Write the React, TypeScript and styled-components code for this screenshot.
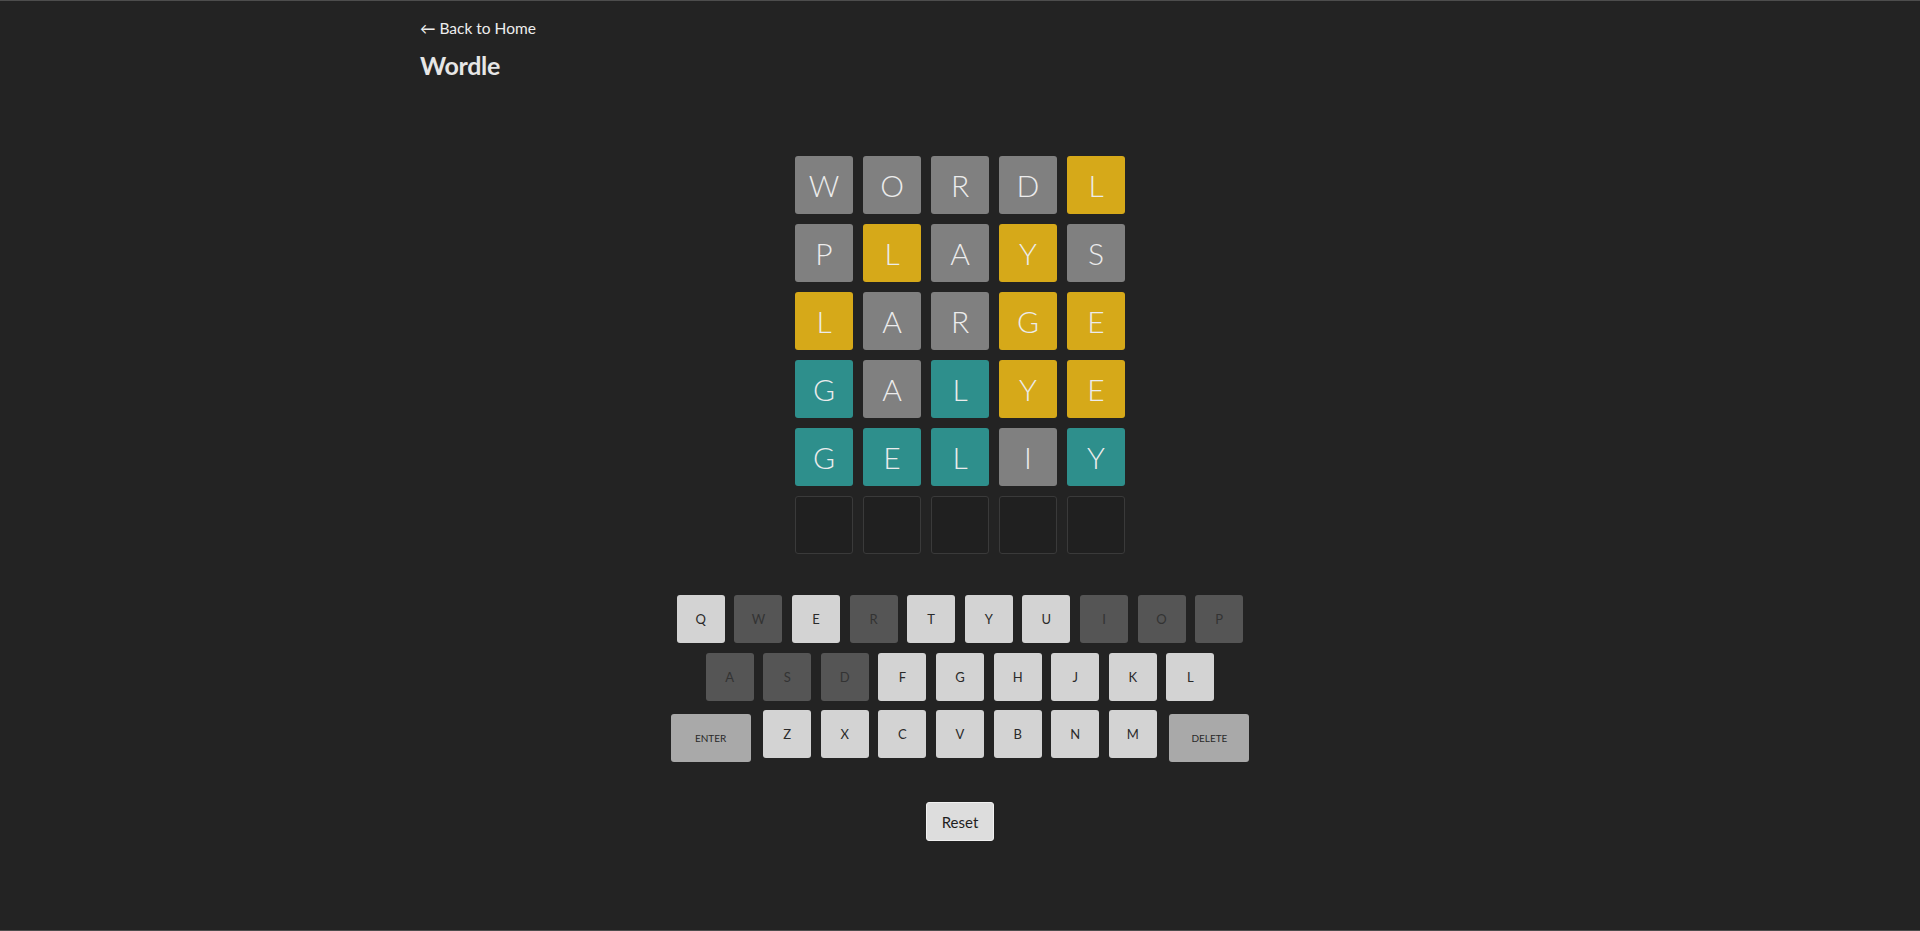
import styled, { createGlobalStyle } from 'styled-components';

type TileState = 'absent' | 'present' | 'correct' | 'empty';
type KeyState = 'unused' | 'absent' | 'wide';

const GUESSES: { letter: string; state: TileState }[][] = [
  [['W', 'absent'], ['O', 'absent'], ['R', 'absent'], ['D', 'absent'], ['L', 'present']],
  [['P', 'absent'], ['L', 'present'], ['A', 'absent'], ['Y', 'present'], ['S', 'absent']],
  [['L', 'present'], ['A', 'absent'], ['R', 'absent'], ['G', 'present'], ['E', 'present']],
  [['G', 'correct'], ['A', 'absent'], ['L', 'correct'], ['Y', 'present'], ['E', 'present']],
  [['G', 'correct'], ['E', 'correct'], ['L', 'correct'], ['I', 'absent'], ['Y', 'correct']],
  [['', 'empty'], ['', 'empty'], ['', 'empty'], ['', 'empty'], ['', 'empty']],
].map((row) => row.map(([letter, state]) => ({ letter, state: state as TileState })));

const USED = new Set(['W', 'R', 'I', 'O', 'P', 'A', 'S', 'D']);

const ROWS = [
  ['Q', 'W', 'E', 'R', 'T', 'Y', 'U', 'I', 'O', 'P'],
  ['A', 'S', 'D', 'F', 'G', 'H', 'J', 'K', 'L'],
  ['ENTER', 'Z', 'X', 'C', 'V', 'B', 'N', 'M', 'DELETE'],
];

const TILE_BG: Record<TileState, string> = {
  absent: '#808080',
  present: '#d6a919',
  correct: '#2e8f8c',
  empty: '#202020',
};

const KEY_BG: Record<KeyState, string> = {
  unused: '#d3d3d3',
  absent: '#555555',
  wide: '#a9a9a9',
};

const GlobalStyle = createGlobalStyle`
  html, body {
    margin: 0;
    padding: 0;
    background: #232323;
  }
  body {
    font-family: Lato, 'Open Sans', sans-serif;
    color: #eeeeee;
  }
`;

const App = (): JSX.Element => {
  const keyState = (k: string): KeyState => {
    if (k.length > 1) return 'wide';
    return USED.has(k) ? 'absent' : 'unused';
  };

  return (
    <Page>
      <GlobalStyle />
      <Container>
        <BackLink href="#">← Back to Home</BackLink>
        <Title>Wordle</Title>
        <Board>
          {GUESSES.map((row, r) => (
            <BoardRow key={r}>
              {row.map((tile, c) => (
                <Tile key={c} $state={tile.state}>
                  {tile.letter}
                </Tile>
              ))}
            </BoardRow>
          ))}
        </Board>
        <Keyboard>
          {ROWS.map((row, r) => (
            <KeyRow key={r}>
              {row.map((k) => (
                <Key key={k} $state={keyState(k)}>
                  {k}
                </Key>
              ))}
            </KeyRow>
          ))}
        </Keyboard>
        <ResetButton>Reset</ResetButton>
      </Container>
    </Page>
  );
};

export default App;

const Page = styled.div`
  box-sizing: border-box;
  min-height: 100vh;
  border-top: 1px solid #4d4d4d;
  border-bottom: 1px solid #4d4d4d;
`;

const Container = styled.div`
  max-width: 1080px;
  margin: 0 auto;
  padding-top: 14px;
  display: flex;
  flex-direction: column;
`;

const BackLink = styled.a`
  align-self: flex-start;
  color: #eeeeee;
  font-size: 15.5px;
  text-decoration: none;
  line-height: 26px;
`;

const Title = styled.h1`
  margin: 9px 0 0;
  font-size: 25px;
  font-weight: 700;
  line-height: 30px;
  color: #e6e6e6;
  letter-spacing: -0.3px;
`;

const Board = styled.div`
  margin-top: 76px;
  align-self: center;
  display: flex;
  flex-direction: column;
  gap: 10px;
`;

const BoardRow = styled.div`
  display: flex;
  gap: 10px;
`;

const Tile = styled.div<{ $state: TileState }>`
  box-sizing: border-box;
  width: 58px;
  height: 58px;
  border-radius: 3px;
  background: ${({ $state }) => TILE_BG[$state]};
  border: ${({ $state }) => ($state === 'empty' ? '1px solid #3a3a3a' : 'none')};
  display: flex;
  align-items: center;
  justify-content: center;
  font-size: 30px;
  font-weight: 300;
  color: #ececec;
`;

const Keyboard = styled.div`
  margin-top: 41px;
  align-self: center;
  display: flex;
  flex-direction: column;
  align-items: center;
  gap: 9.6px;
`;

const KeyRow = styled.div`
  display: flex;
  gap: 9.6px;
  align-items: flex-start;
`;

const Key = styled.button<{ $state: KeyState }>`
  box-sizing: border-box;
  width: ${({ $state }) => ($state === 'wide' ? '80px' : '48px')};
  height: 48px;
  margin: ${({ $state }) => ($state === 'wide' ? '4px 3px 0' : '0')};
  border: none;
  border-radius: 3px;
  background: ${({ $state }) => KEY_BG[$state]};
  color: ${({ $state }) => ($state === 'absent' ? '#333333' : '#2a2a2a')};
  font-family: Lato, 'Open Sans', sans-serif;
  font-size: ${({ $state }) => ($state === 'wide' ? '10px' : '13px')};
  padding: 0;
  cursor: pointer;
`;

const ResetButton = styled.button`
  align-self: center;
  margin-top: 40px;
  width: 68px;
  height: 39px;
  border: 1px solid #f0f0f0;
  border-radius: 3px;
  background: #dddddd;
  color: #1e1e1e;
  font-family: Lato, 'Open Sans', sans-serif;
  font-size: 15px;
  cursor: pointer;
`;
